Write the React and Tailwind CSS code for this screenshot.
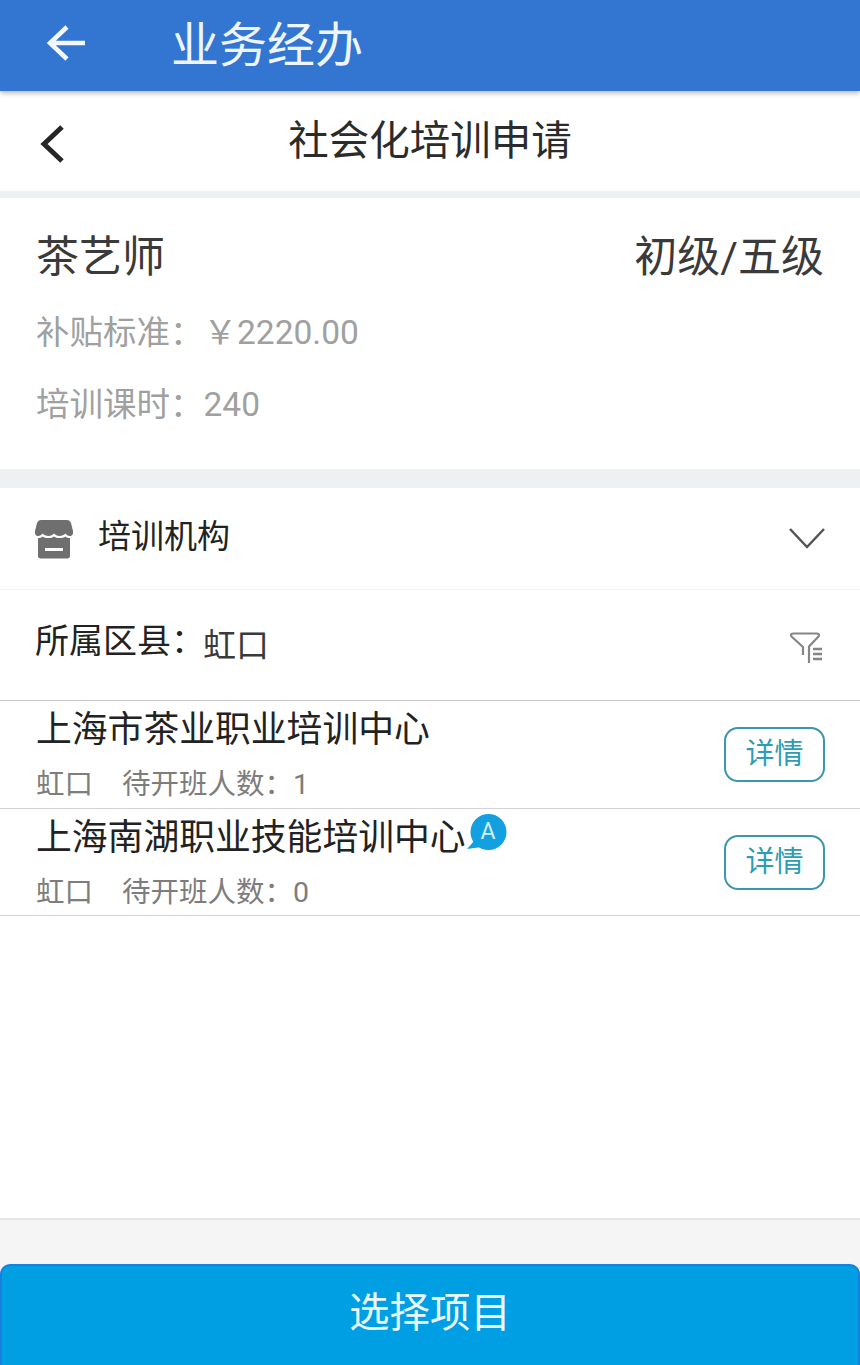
const font = { fontFamily: '"Roboto", "Noto Sans CJK SC", sans-serif' };

function ShopIcon() {
  return (
    <svg width="40" height="40" viewBox="0 0 40 40" fill="#6f6f6f">
      <path d="M7 1h26c2 0 3 1 4 3l2 8c.5 3-1 5-3 5-2.500 0-3.500-1-4.500-2.500C30 16 28 17 25.500 17c-2.500 0-4-1-5.500-2.500C18.500 16 17 17 14.500 17c-2.500 0-4.500-1-6-2.500C7.500 16 6 17 4 17c-2 0-3.500-2-3-5l2-8c1-2 2-3 4-3z" />
      <path d="M4 19c2 0 3.500-.5 4.500-1.500 1.500 1 3.500 1.500 6 1.500s4-.5 5.500-1.500c1.500 1 3 1.500 5.500 1.500s4.500-.5 6-1.500c1 1 2.500 1.500 4.500 1.500v18c0 1.500-1 2.500-2.500 2.500h-27C5 39.500 4 38.500 4 37z" />
      <rect x="11" y="29" width="18" height="3" fill="#fff" />
    </svg>
  );
}

function FilterIcon() {
  return (
    <svg width="36" height="36" viewBox="0 0 36 36" fill="none" stroke="#858585" strokeWidth="2.200" className="ml-auto mt-[6px]">
      <path d="M15 25V17L3.500 6.500C2.500 5 3 3.500 5 3.500h24c2 0 2.500 1.500 1.500 3L21 16.500V33" strokeLinejoin="round" />
      <path d="M25 19h9M25 24h9M25 29h9" strokeWidth="2.500" />
    </svg>
  );
}

function Badge() {
  return (
    <span className="absolute left-[467px] top-[5px] w-[40px] h-[36px]">
      <svg width="40" height="36" viewBox="0 0 40 36">
        <circle cx="21.500" cy="18" r="18" fill="#12a0e0" />
        <path d="M8 26 L0 35 L15 33z" fill="#12a0e0" />
      </svg>
      <span className="absolute left-[1px] top-0 w-[40px] h-[36px] flex items-center justify-center text-[23px] leading-none text-[#d7f1ff]">A</span>
    </span>
  );
}

function OrgRow({ name, count, badge }) {
  return (
    <div className="relative h-[107.5px] border-b border-[#d2d2d2] pl-[36px] pr-[35px] flex justify-between">
      <div className="relative">
        <div className="pt-[8px] text-[35.800px] leading-[42px] text-[#222] whitespace-nowrap">{name}</div>
        <div className="pt-[16px] flex text-[28.5px] leading-[36px] text-[#7d7d7d] whitespace-nowrap">
          <span className="w-[86px]">虹口</span>
          <span>待开班人数：{count}</span>
        </div>
      </div>
      {badge && <Badge />}
      <button className="mt-[26px] w-[101px] h-[55px] rounded-[14px] border-2 border-[#3a97ad] text-[29px] leading-none text-[#2d9cb5]">
        详情
      </button>
    </div>
  );
}

export default function App() {
  return (
    <div className="w-[860px] h-[1365px] overflow-hidden bg-white flex flex-col" style={font}>
      <header className="relative z-10 h-[91px] shrink-0 bg-[#3276d1] shadow-[0_2px_5px_rgba(0,0,0,0.3)] flex items-center pl-[46px]">
        <svg width="40" height="36" viewBox="0 0 40 36" fill="none" stroke="#f4f8ff" strokeWidth="4.500" className="mb-[5px]">
          <path d="M39 18H4M21 2 4 18l17 16" />
        </svg>
        <h1 className="ml-[85px] text-[48px] leading-none text-[#eef5ff] font-normal">业务经办</h1>
      </header>

      <div className="relative h-[100px] shrink-0 flex items-center justify-center">
        <svg width="26" height="38" viewBox="0 0 26 38" fill="none" stroke="#262626" strokeWidth="5" className="absolute left-[39px] top-[34px]">
          <path d="M23 2 5 19l18 17" />
        </svg>
        <h2 className="text-[40.500px] leading-none text-[#2b2b2b] font-normal">社会化培训申请</h2>
      </div>

      <section className="h-[278px] shrink-0 border-t-[7px] border-[#eef1f4] pl-[36px] pr-[36px]">
        <div className="pt-[34px] flex justify-between text-[43px] leading-[50px] text-[#3a3a3a]">
          <span>茶艺师</span>
          <span>初级/五级</span>
        </div>
        <div className="pt-[29px] text-[33.500px] leading-[44px] text-[#a0a0a0]">补贴标准：￥2220.00</div>
        <div className="pt-[28px] text-[33.500px] leading-[44px] text-[#a0a0a0]">培训课时：240</div>
      </section>

      <div className="h-[19px] shrink-0 bg-[#eff0f1]" />

      <div className="h-[102px] shrink-0 border-b border-[#f4f4f4] pl-[34px] pr-[35px] flex items-center">
        <ShopIcon />
        <span className="ml-[24px] text-[33px] leading-none text-[#222] mb-[5px]">培训机构</span>
        <svg width="36" height="22" viewBox="0 0 36 22" fill="none" stroke="#555" strokeWidth="2.500" className="ml-auto mb-[2px]">
          <path d="M1 2 18 20 35 2" />
        </svg>
      </div>

      <div className="h-[111px] shrink-0 border-b border-[#c9c9c9] pl-[35px] pr-[36px] flex items-center">
        <span className="text-[34px] leading-none text-[#222] mb-[8px]">所属区县：</span>
        <span className="ml-[-2px] text-[33px] leading-none text-[#3a3a3a]">虹口</span>
        <FilterIcon />
      </div>

      <OrgRow name="上海市茶业职业培训中心" count="1" />
      <OrgRow name="上海南湖职业技能培训中心" count="0" badge />

      <div className="flex-1" />

      <div className="h-[147px] shrink-0 border-t-2 border-[#e4e4e4] bg-[#f5f5f5] pt-[44px]">
        <button className="w-full h-[101px] rounded-t-[10px] border-t-2 border-x-2 border-[#1680dc] bg-[#009fe3] pb-[4px] text-[40.500px] leading-none text-[#e9f7ff]">
          选择项目
        </button>
      </div>
    </div>
  );
}
